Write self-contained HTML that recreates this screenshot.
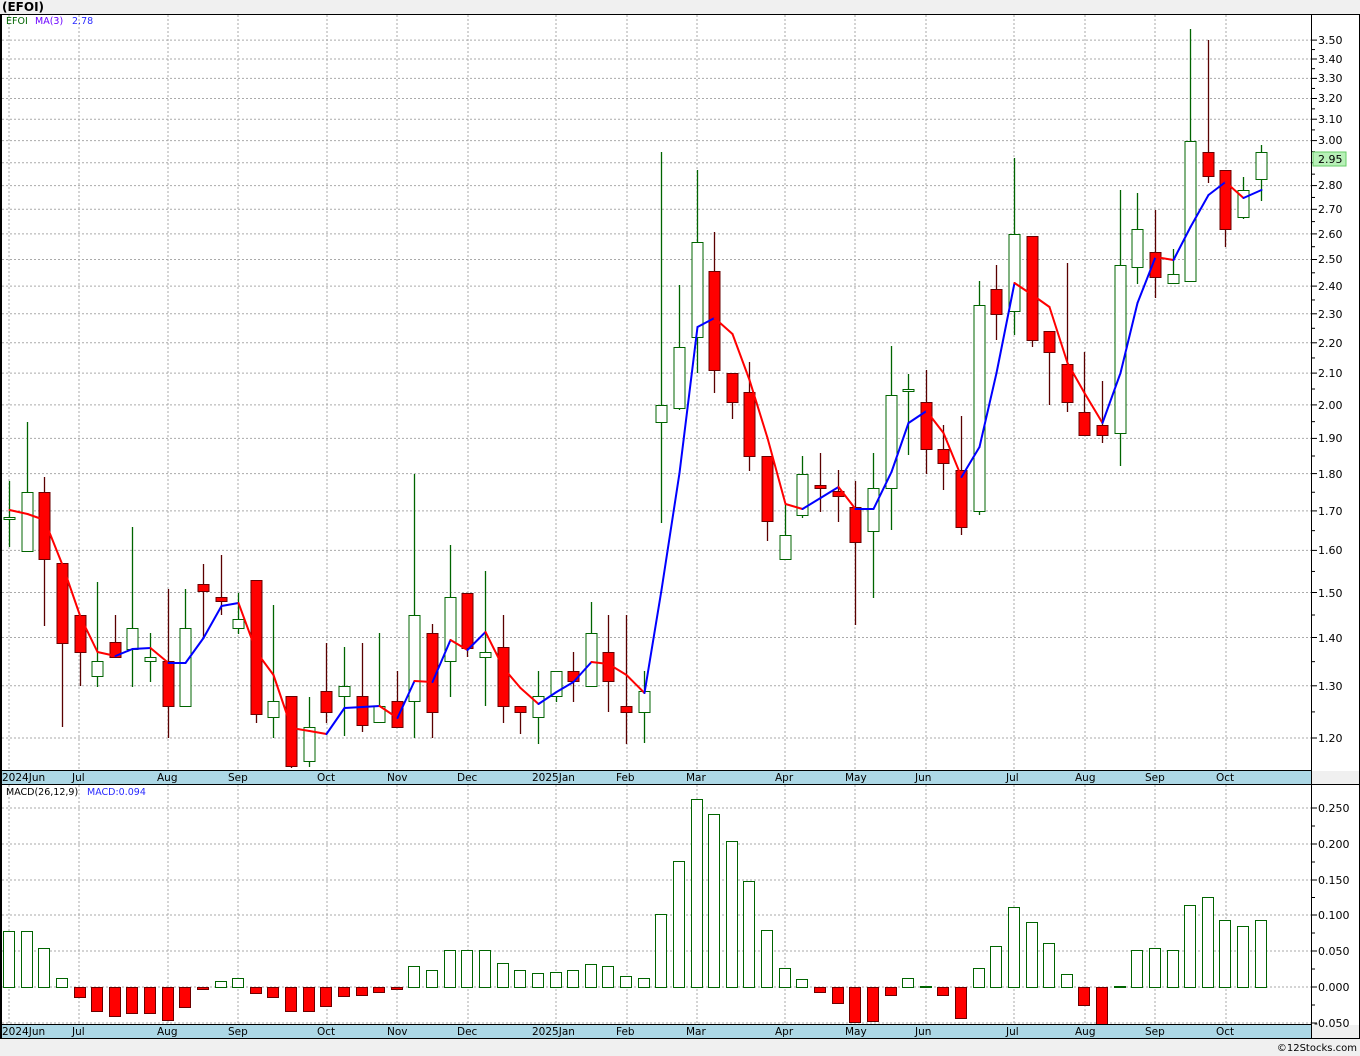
<!DOCTYPE html>
<html><head><meta charset="utf-8">
<style>
html,body{margin:0;padding:0;background:#f0f0f0;}
svg{display:block;}
text{font-family:"DejaVu Sans","Liberation Sans",sans-serif;}
</style></head>
<body>
<svg id="s" width="1360" height="1056" xmlns="http://www.w3.org/2000/svg">
<rect x="0" y="0" width="1360" height="1056" fill="#f0f0f0"/>
<text x="2" y="11" font-size="12" font-weight="bold" fill="#000">(EFOI)</text>
<rect x="1" y="14" width="1359" height="757" fill="#fff"/>
<rect x="1" y="784" width="1359" height="241" fill="#fff"/>
<g id="grid"></g>
<g id="candles"></g>
<g id="ma"></g>
<g id="macd"></g>
<rect x="1" y="770" width="1310" height="14" fill="#add8e6"/>
<rect x="1" y="1024" width="1310" height="14" fill="#add8e6"/>
<line x1="0" y1="770.5" x2="1311" y2="770.5" stroke="#000"/>
<line x1="0" y1="784.5" x2="1360" y2="784.5" stroke="#000"/>
<line x1="0" y1="1024.5" x2="1311" y2="1024.5" stroke="#000"/>
<line x1="0" y1="1038.5" x2="1360" y2="1038.5" stroke="#000"/>
<line x1="0" y1="14.5" x2="1360" y2="14.5" stroke="#000"/>
<line x1="1" y1="14" x2="1" y2="1038" stroke="#000" stroke-width="2"/>
<line x1="1311.5" y1="14" x2="1311.5" y2="1038" stroke="#000"/>
<line x1="1359.5" y1="14" x2="1359.5" y2="1038" stroke="#000"/>
<g id="ticks"></g>
<g font-size="10.5" fill="#000">
<text x="2" y="781">2024Jun</text><text x="72" y="781">Jul</text><text x="157" y="781">Aug</text><text x="228" y="781">Sep</text><text x="317" y="781">Oct</text><text x="387" y="781">Nov</text><text x="457" y="781">Dec</text><text x="532" y="781">2025Jan</text><text x="616" y="781">Feb</text><text x="686" y="781">Mar</text><text x="775" y="781">Apr</text><text x="845" y="781">May</text><text x="915" y="781">Jun</text><text x="1006" y="781">Jul</text><text x="1075" y="781">Aug</text><text x="1145" y="781">Sep</text><text x="1216" y="781">Oct</text>
<text x="2" y="1035">2024Jun</text><text x="72" y="1035">Jul</text><text x="157" y="1035">Aug</text><text x="228" y="1035">Sep</text><text x="317" y="1035">Oct</text><text x="387" y="1035">Nov</text><text x="457" y="1035">Dec</text><text x="532" y="1035">2025Jan</text><text x="616" y="1035">Feb</text><text x="686" y="1035">Mar</text><text x="775" y="1035">Apr</text><text x="845" y="1035">May</text><text x="915" y="1035">Jun</text><text x="1006" y="1035">Jul</text><text x="1075" y="1035">Aug</text><text x="1145" y="1035">Sep</text><text x="1216" y="1035">Oct</text>
</g>
<g font-size="11" fill="#000">
<text x="1318" y="44">3.50</text><text x="1318" y="63">3.40</text><text x="1318" y="82">3.30</text><text x="1318" y="102">3.20</text><text x="1318" y="123">3.10</text><text x="1318" y="144">3.00</text><text x="1318" y="189">2.80</text><text x="1318" y="213">2.70</text><text x="1318" y="238">2.60</text><text x="1318" y="263">2.50</text><text x="1318" y="290">2.40</text><text x="1318" y="318">2.30</text><text x="1318" y="347">2.20</text><text x="1318" y="377">2.10</text><text x="1318" y="409">2.00</text><text x="1318" y="442">1.90</text><text x="1318" y="478">1.80</text><text x="1318" y="515">1.70</text><text x="1318" y="554">1.60</text><text x="1318" y="597">1.50</text><text x="1318" y="642">1.40</text><text x="1318" y="690">1.30</text><text x="1318" y="742">1.20</text>
<text x="1318" y="812">0.250</text><text x="1318" y="848">0.200</text><text x="1318" y="884">0.150</text><text x="1318" y="919">0.100</text><text x="1318" y="955">0.050</text><text x="1318" y="991">0.000</text><text x="1314" y="1027">-0.050</text>
</g>
<rect x="1313" y="152" width="33" height="14" fill="#b8f0b8" stroke="#6c6" stroke-width="1"/>
<text x="1318" y="163" font-size="11" fill="#000">2.95</text>
<g font-size="9.5">
<text x="6" y="24" fill="#006400">EFOI</text><text x="35" y="24" fill="#6a00ff">MA(3)</text><text x="72" y="24" fill="#2a2aff">2.78</text>
<text x="6" y="795" fill="#000">MACD(26,12,9)</text><text x="87" y="795" fill="#2a2aff">MACD:0.094</text>
</g>
<text x="1357" y="1051" font-size="10" fill="#000" text-anchor="end">©12Stocks.com</text>
</svg>
<script>
var NS="http://www.w3.org/2000/svg";
function el(p,t,a){var e=document.createElementNS(NS,t);for(var k in a)e.setAttribute(k,a[k]);document.getElementById(p).appendChild(e);return e;}
var py=[40.1,59,78.4,98.5,119.2,140.6,162.7,185.6,209.3,233.9,259.5,286.1,313.8,342.8,373.1,404.9,438.4,473.6,510.9,550.4,592.5,637.5,685.8,738];
py.forEach(function(y){el("grid","line",{x1:2,y1:y,x2:1311,y2:y,stroke:"#aaa","stroke-dasharray":"2,2"});el("ticks","line",{x1:1311,y1:y,x2:1317,y2:y,stroke:"#000"});});
for(var i=0;i<py.length-1;i++){var m=(py[i]+py[i+1])/2;el("ticks","line",{x1:1311,y1:m,x2:1315,y2:m,stroke:"#000"});}
var my=[808,844,880,915,951,987,1023];
my.forEach(function(y){el("grid","line",{x1:2,y1:y,x2:1311,y2:y,stroke:"#aaa","stroke-dasharray":"2,2"});el("ticks","line",{x1:1311,y1:y,x2:1317,y2:y,stroke:"#000"});});
for(var i=0;i<my.length-1;i++){var m=(my[i]+my[i+1])/2;el("ticks","line",{x1:1311,y1:m,x2:1315,y2:m,stroke:"#000"});}
[9,79,168,238,327,397,468,556,627,697,785,855,926,1014,1085,1155,1226].forEach(function(x){
el("grid","line",{x1:x,y1:15,x2:x,y2:770,stroke:"#aaa","stroke-dasharray":"2,2"});
el("grid","line",{x1:x,y1:785,x2:x,y2:1024,stroke:"#aaa","stroke-dasharray":"2,2"});});
var C=[
["g",517,519,481,547],["g",492,551,422,551],["r",492,559,477,626],["r",563,643,563,727],["r",615,652,615,686],
["g",661,676,582,687],["r",642,657,615,657],["g",628,649,527,687],["g",657,661,633,682],["r",661,706,589,738],
["g",628,706,589,706],["r",584,591,564,639],["r",597,601,555,615],["g",619,628,593,634],["r",580,714,580,723],
["g",701,717,605,738],["r",696,766,696,768],["g",727,761,697,767],["r",691,712,643,723],["g",686,696,647,736],
["r",696,725,643,732],["g",706,722,633,722],["r",701,727,671,727],["g",615,701,474,738],["r",633,712,624,738],
["g",597,661,545,697],["r",593,648,593,657],["g",652,657,571,706],["r",647,706,615,723],["r",706,712,706,734],
["g",696,717,671,744],["g",671,696,671,702],["r",671,681,652,702],["g",633,686,602,686],["r",652,681,615,712],
["r",706,712,615,744],["g",691,712,671,743],["g",405,422,152,523],["g",347,408,285,410],["g",242,337,170,373],
["r",271,370,232,393],["r",373,402,373,419],["r",392,456,362,471],["r",456,521,456,541],["g",535,559,503,559],
["g",474,515,456,518],["r",485,488,453,512],["r",491,496,470,522],["r",507,542,481,625],["g",488,531,453,598],
["g",395,488,346,530],["g",389,390,374,455],["r",402,449,370,474],["r",449,463,425,490],["r",470,527,416,535],
["g",305,511,281,515],["r",289,314,265,340],["g",234,311,158,335],["r",236,340,236,347],["r",331,352,331,405],
["r",364,402,263,412],["r",412,435,352,435],["r",425,435,381,443],["g",265,433,190,466],["g",229,267,193,284],
["r",252,277,210,298],["g",274,283,249,283],["g",141,281,29,281],["r",152,176,40,183],["r",170,229,170,247],
["g",190,217,177,219],["g",152,179,145,201]];
function X(i){return Math.round(9+i*17.63);}
C.forEach(function(c,i){var x=X(i);var col=c[0]=="g"?"#006400":"#5a0000";
el("candles","line",{x1:x+0.5,y1:c[3],x2:x+0.5,y2:c[4],stroke:col,"stroke-width":1.3});
var h=Math.max(c[2]-c[1],2);
el("candles","rect",{x:x-5,y:c[1]+0.5,width:11,height:h,fill:c[0]=="g"?"#fff":"#f00",stroke:c[0]=="g"?"#006400":"#6a0000","stroke-width":1});});
var M=[510,514,520,565,617,652,656,649,648,663,663,638,606,603,652,675,728,731,734,708,707,706,718,681,682,640,650,632,668,688,704,692,682,662,664,675,693,590,473,327,318,334,380,438,504,509,498,487,509,509,472,423,411,433,477,447,373,283,295,307,363,393,423,373,303,257,260,227,195,182,198,190];
for(var i=0;i<M.length-1;i++){var col=M[i+1]>M[i]?"#f00":"#00f";
el("ma","line",{x1:X(i)+0.5,y1:M[i],x2:X(i+1)+0.5,y2:M[i+1],stroke:col,"stroke-width":2,"stroke-linecap":"round"});}
var D=[931,931,948,978,997,1011,1016,1013,1013,1020,1007,989,981,978,993,997,1011,1011,1006,996,995,992,989,966,970,950,950,950,963,970,973,972,970,964,966,976,978,914,861,799,814,841,881,930,968,979,992,1003,1022,1021,995,978,986,995,1018,968,946,907,922,943,974,1005,1026,986,950,948,950,905,897,920,926,920];
D.forEach(function(v,i){var x=X(i);if(v<987){el("macd","rect",{x:x-5.5,y:v+0.5,width:11,height:987-v,fill:"#fff",stroke:"#006400"});}
else{el("macd","rect",{x:x-5.5,y:987.5,width:11,height:Math.max(v-987,1),fill:"#f00",stroke:"#6a0000"});}});
</script>
</body></html>
